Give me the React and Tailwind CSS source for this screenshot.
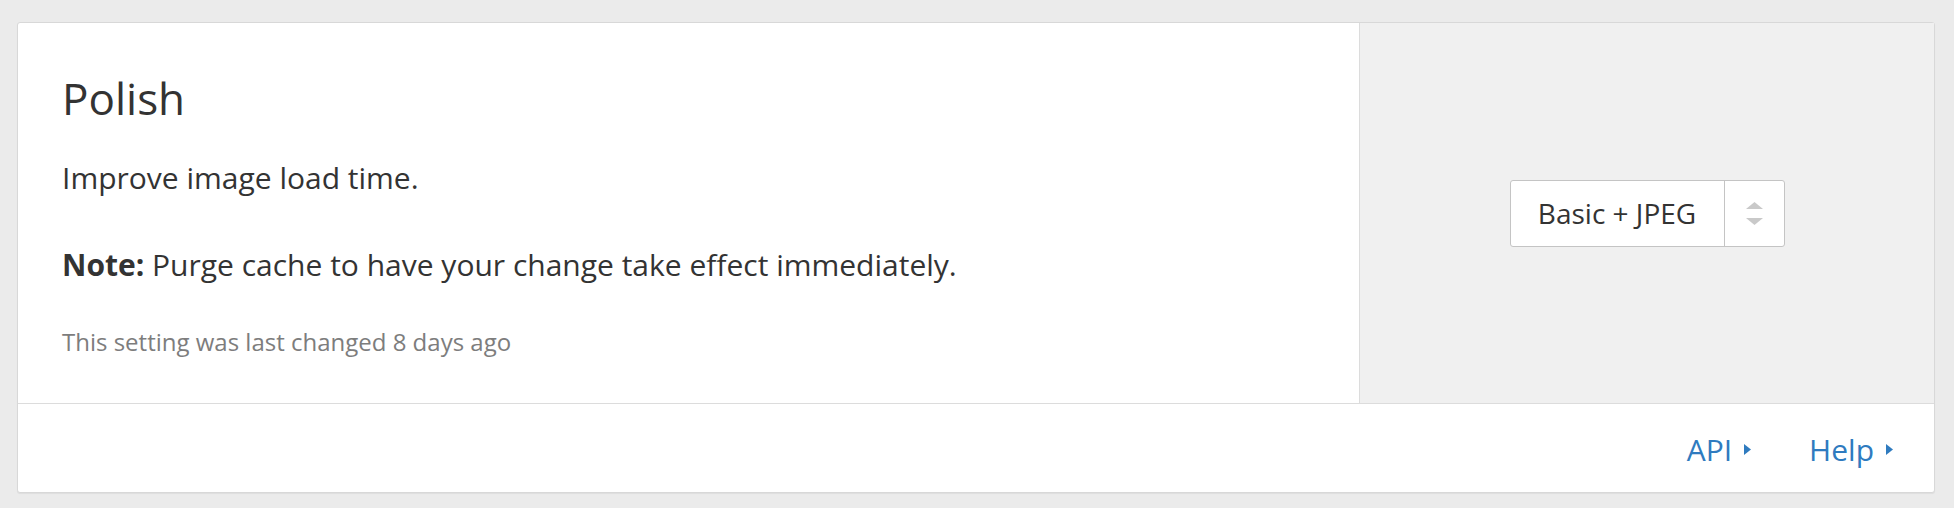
import React from 'react';

const Caret = () => (
  <svg width="7" height="11" viewBox="0 0 7 11" className="ml-[12px] inline-block">
    <path d="M0 0 L7 5.5 L0 11 Z" fill="currentColor" />
  </svg>
);

const SettingCard = () => {
  return (
    <div className="rounded-[3px] border border-[#d8d8d8] bg-white shadow-[0_1px_1px_rgba(0,0,0,0.06)]">
      <div className="flex border-b border-[#dcdcdc]">
        {/* description */}
        <div className="flex-1 pl-[44px] pr-8 pt-[49px] pb-[45px]">
          <h2 className="text-[44px] leading-[52px] text-[#333]">Polish</h2>
          <p className="mt-[34px] text-[30px] leading-[40px] text-[#333]">Improve image load time.</p>
          <p className="mt-[47px] text-[30px] leading-[40px] text-[#333]">
            <strong className="font-bold">Note:</strong> Purge cache to have your change take effect immediately.
          </p>
          <p className="mt-[41px] text-[24px] leading-[32px] text-[#7d7d7d]">This setting was last changed 8 days ago</p>
        </div>

        {/* control */}
        <div className="flex w-[575px] items-center justify-center border-l border-[#dcdcdc] bg-[#f0f0f0]">
          <div className="flex h-[67px] w-[275px] items-stretch rounded-[3px] border border-[#c4c4c4] bg-white">
            <div className="flex flex-1 items-center justify-center text-[28px] text-[#333]">Basic + JPEG</div>
            <div className="flex w-[60px] flex-col items-center justify-center gap-[9px] border-l border-[#c4c4c4]">
              <svg width="17" height="7" viewBox="0 0 17 7">
                <path d="M0 7 L8.5 0 L17 7 Z" fill="#c9c9c9" />
              </svg>
              <svg width="17" height="7" viewBox="0 0 17 7">
                <path d="M0 0 L17 0 L8.5 7 Z" fill="#c9c9c9" />
              </svg>
            </div>
          </div>
        </div>
      </div>

      {/* footer links */}
      <div className="flex h-[88px] items-center justify-end gap-[58px] pt-[3px] pr-[41px] text-[30px] leading-[40px] text-[#2f7bbf]">
        <a className="flex items-center">API<Caret /></a>
        <a className="flex items-center">Help<Caret /></a>
      </div>
    </div>
  );
};

export default function App() {
  return (
    <div
      className="min-h-[508px] bg-[#ebebeb] pt-[22px] pl-[17px] pr-[19px]"
      style={{ fontFamily: '"Open Sans", "Noto Sans", sans-serif' }}
    >
      <SettingCard />
    </div>
  );
}
